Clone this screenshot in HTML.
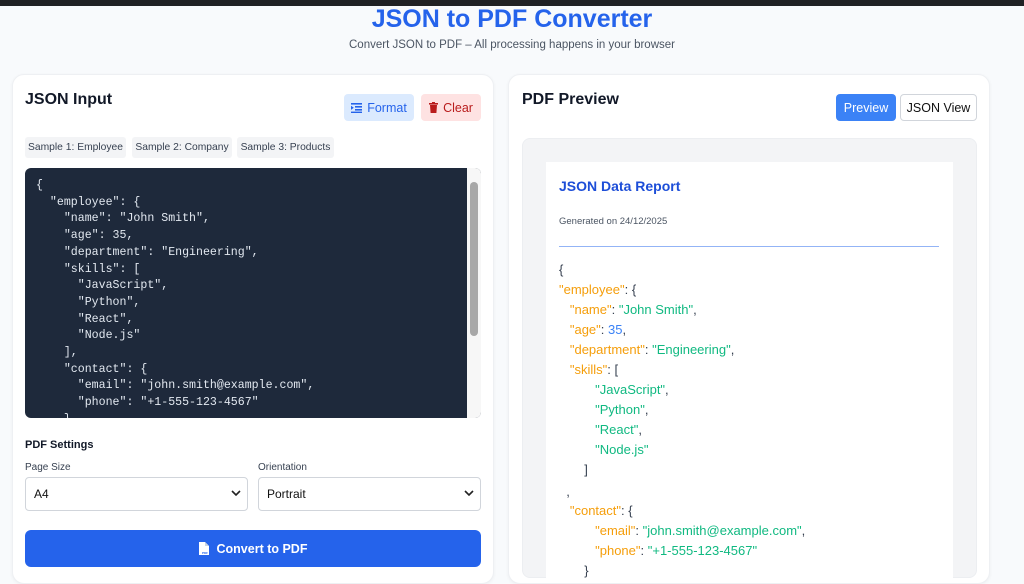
<!DOCTYPE html>
<html><head><meta charset="utf-8">
<style>
*{box-sizing:border-box;margin:0;padding:0}
body{width:1024px;height:572px;overflow:hidden;background:#f8fafc;font-family:"Liberation Sans",sans-serif;color:#1f2937;position:relative}
.top{position:absolute;left:0;top:0;width:1024px;height:6px;background:#202124}
h1{position:absolute;top:5px;left:0;width:1024px;text-align:center;font-size:25px;font-weight:bold;color:#2563eb}
.sub{position:absolute;top:39px;left:0;width:1024px;text-align:center;font-size:11.5px;color:#4b5563}
.card{position:absolute;background:#fff;border:1px solid #eef0f3;border-radius:12px;box-shadow:0 1px 3px rgba(0,0,0,.05)}
.h2{position:absolute;font-size:16px;font-weight:bold;color:#111827}
.btn{position:absolute;border-radius:4px;font-size:12.5px;display:flex;align-items:center;justify-content:center;gap:5px}
.chip{position:absolute;top:137px;height:21px;background:#f3f4f6;border-radius:3px;font-size:10.3px;color:#374151;line-height:21px;text-align:center;white-space:nowrap}
.ta{position:absolute;left:25px;top:168px;width:456px;height:250px;background:#1e293b;border-radius:6px;overflow:hidden}
.ta pre{position:absolute;left:11px;top:10px;font-family:"Liberation Mono",monospace;font-size:11.6px;line-height:16.7px;color:#e2e8f0}
.sb{position:absolute;right:0;top:0;width:14px;height:250px;background:#f7f7f7}
.thumb{position:absolute;left:3px;top:14px;width:8px;height:154px;background:#a8a8a8;border-radius:4px}
.lbl{position:absolute;font-size:10px;color:#374151}
.sel{position:absolute;top:477px;height:34px;border:1px solid #d1d5db;border-radius:4px;background:#fff;font-size:12px;padding-left:8px;line-height:32px;color:#111}
.sel svg{position:absolute;right:6px;top:12px}
.prev{position:absolute;left:522px;top:138px;width:455px;height:440px;background:#f3f4f6;border-radius:8px;border:1px solid #eceef1}
.page{position:absolute;left:546px;top:162px;width:407px;height:420px;background:#fff}
.jl{position:absolute;left:559px;font-size:13px;line-height:20px;color:#374151;white-space:pre}
.k{color:#f59e0b}.s{color:#10b981}.n{color:#3b82f6}
</style></head><body>
<div class="top"></div>
<h1>JSON to PDF Converter</h1>
<div class="sub">Convert JSON to PDF – All processing happens in your browser</div>

<div class="card" style="left:12px;top:74px;width:482px;height:510px"></div>
<div class="h2" style="left:25px;top:91px">JSON Input</div>
<div class="btn" style="left:344px;top:94px;width:70px;height:27px;background:#dbeafe;color:#2563eb"><svg width="11" height="10" viewBox="0 0 11 10"><g fill="#2563eb"><rect x="0" y="0" width="11" height="1.6"/><rect x="4" y="3" width="7" height="1.6"/><rect x="4" y="6" width="7" height="1.6"/><rect x="0" y="8.6" width="11" height="1.4"/><path d="M0 2.7L2.8 4.8 0 6.9z"/></g></svg>Format</div>
<div class="btn" style="left:421px;top:94px;width:60px;height:27px;background:#fee2e2;color:#b91c1c"><svg width="9" height="11" viewBox="0 0 9 11"><g fill="#b91c1c"><rect x="0" y="1" width="9" height="1.6"/><rect x="3" y="0" width="3" height="1.4"/><path d="M1 3h7l-.6 8H1.6z"/></g></svg>Clear</div>
<div class="chip" style="left:25px;width:101px">Sample 1: Employee</div>
<div class="chip" style="left:132px;width:100px">Sample 2: Company</div>
<div class="chip" style="left:237px;width:97px">Sample 3: Products</div>
<div class="ta"><pre>{
  "employee": {
    "name": "John Smith",
    "age": 35,
    "department": "Engineering",
    "skills": [
      "JavaScript",
      "Python",
      "React",
      "Node.js"
    ],
    "contact": {
      "email": "john.smith@example.com",
      "phone": "+1-555-123-4567"
    }</pre><div class="sb"><div class="thumb"></div></div></div>
<div class="h2" style="left:25px;top:439px;font-size:11px">PDF Settings</div>
<div class="lbl" style="left:25px;top:462px">Page Size</div>
<div class="lbl" style="left:258px;top:462px">Orientation</div>
<div class="sel" style="left:25px;width:223px">A4<svg width="10" height="6" viewBox="0 0 10 6"><path d="M1 1l4 4 4-4" fill="none" stroke="#222" stroke-width="1.6"/></svg></div>
<div class="sel" style="left:258px;width:223px">Portrait<svg width="10" height="6" viewBox="0 0 10 6"><path d="M1 1l4 4 4-4" fill="none" stroke="#222" stroke-width="1.6"/></svg></div>
<div class="btn" style="left:25px;top:530px;width:456px;height:37px;background:#2563eb;color:#fff;font-weight:bold;border-radius:6px;gap:8px"><svg width="10" height="13" viewBox="0 0 10 13"><path d="M0 0h6l4 4v9H0z" fill="#fff"/><path d="M6 0v4h4" fill="#cbd5e1"/><text x="3" y="12" font-size="3" fill="#2563eb" font-family="Liberation Sans">PDF</text></svg>Convert to PDF</div>

<div class="card" style="left:508px;top:74px;width:482px;height:510px"></div>
<div class="h2" style="left:522px;top:91px">PDF Preview</div>
<div class="btn" style="left:836px;top:94px;width:60px;height:27px;background:#3b82f6;color:#fff">Preview</div>
<div class="btn" style="left:900px;top:94px;width:77px;height:27px;background:#fff;border:1px solid #d1d5db;color:#111">JSON View</div>
<div class="prev"></div>
<div class="page"></div>
<div style="position:absolute;left:559px;top:178px;font-size:14px;font-weight:bold;color:#1d4ed8">JSON Data Report</div>
<div style="position:absolute;left:559px;top:216px;font-size:9.5px;color:#4b5563">Generated on 24/12/2025</div>
<div style="position:absolute;left:559px;top:246px;width:380px;height:1px;background:#93b4f6"></div>
<div class="jl" style="top:260px">{</div>
<div class="jl" style="top:280px"><span class="k">"employee"</span>: {</div>
<div class="jl" style="top:300px">   <span class="k">"name"</span>: <span class="s">"John Smith"</span>,</div>
<div class="jl" style="top:320px">   <span class="k">"age"</span>: <span class="n">35</span>,</div>
<div class="jl" style="top:340px">   <span class="k">"department"</span>: <span class="s">"Engineering"</span>,</div>
<div class="jl" style="top:360px">   <span class="k">"skills"</span>: [</div>
<div class="jl" style="top:380px">          <span class="s">"JavaScript"</span>,</div>
<div class="jl" style="top:400px">          <span class="s">"Python"</span>,</div>
<div class="jl" style="top:420px">          <span class="s">"React"</span>,</div>
<div class="jl" style="top:440px">          <span class="s">"Node.js"</span></div>
<div class="jl" style="top:460px">       ]</div>
<div class="jl" style="top:482px">  ,</div>
<div class="jl" style="top:501px">   <span class="k">"contact"</span>: {</div>
<div class="jl" style="top:521px">          <span class="k">"email"</span>: <span class="s">"john.smith@example.com"</span>,</div>
<div class="jl" style="top:541px">          <span class="k">"phone"</span>: <span class="s">"+1-555-123-4567"</span></div>
<div class="jl" style="top:561px">       }</div>
</body></html>
